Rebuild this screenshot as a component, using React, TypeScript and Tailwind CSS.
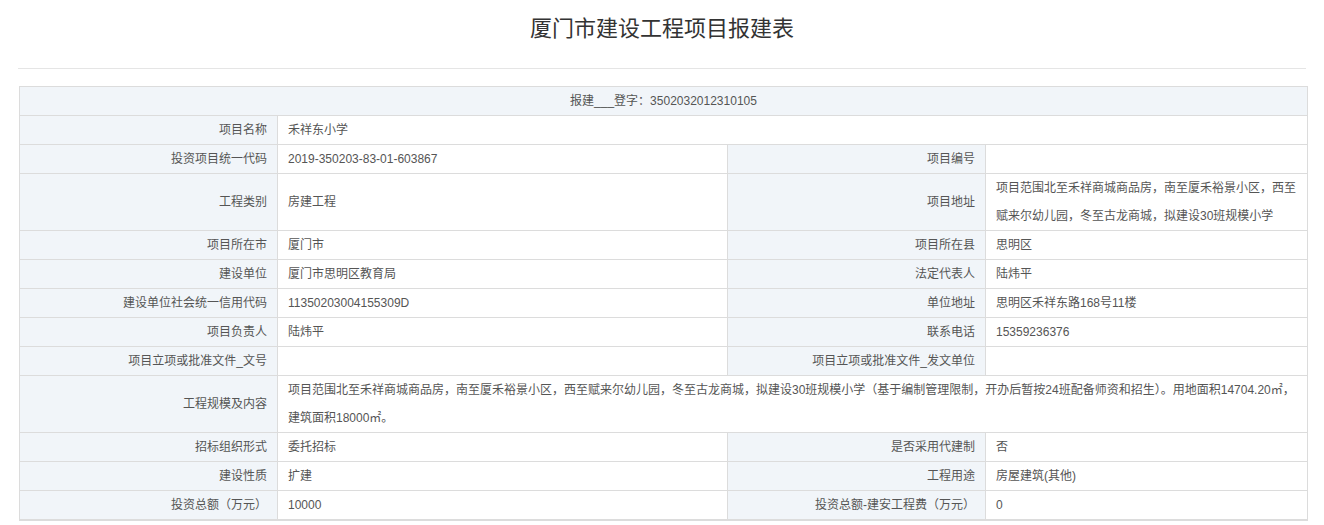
export default function App() {
  const L = "bg-[#f1f5f9] border border-[#dcdcdc] text-right pr-[10px] align-middle";
  const V = "border border-[#dcdcdc] pl-[10px] pr-[8px] align-middle";
  const rows: [string, string, string, string][] = [
    ["投资项目统一代码", "2019-350203-83-01-603867", "项目编号", ""],
    ["工程类别", "房建工程", "项目地址", "项目范围北至禾祥商城商品房，南至厦禾裕景小区，西至赋来尔幼儿园，冬至古龙商城，拟建设30班规模小学"],
    ["项目所在市", "厦门市", "项目所在县", "思明区"],
    ["建设单位", "厦门市思明区教育局", "法定代表人", "陆炜平"],
    ["建设单位社会统一信用代码", "11350203004155309D", "单位地址", "思明区禾祥东路168号11楼"],
    ["项目负责人", "陆炜平", "联系电话", "15359236376"],
    ["项目立项或批准文件_文号", "", "项目立项或批准文件_发文单位", ""],
  ];
  const rows2: [string, string, string, string][] = [
    ["招标组织形式", "委托招标", "是否采用代建制", "否"],
    ["建设性质", "扩建", "工程用途", "房屋建筑(其他)"],
    ["投资总额（万元）", "10000", "投资总额-建安工程费（万元）", "0"],
    ["", "", "", ""],
  ];
  const R = (r: [string, string, string, string], i: number) => (
    <tr key={i}>
      <td className={L}>{r[0]}</td>
      <td className={V}>{r[1]}</td>
      <td className={L}>{r[2]}</td>
      <td className={V}>{r[3]}</td>
    </tr>
  );
  return (
    <div className="bg-white w-[1324px] h-[525px] overflow-hidden text-[#555] text-[12px] leading-[28px]" style={{ fontFamily: '"Liberation Sans","Noto Sans CJK SC",sans-serif' }}>
      <h1 className="text-center text-[22px] text-[#333] leading-[30px] pt-[14px] pb-[24px]">厦门市建设工程项目报建表</h1>
      <div className="mx-[18px] w-[1288px] border-t border-[#e5e5e5]"></div>
      <table className="ml-[19px] mt-[17px] w-[1288px] border-collapse table-fixed">
        <colgroup>
          <col className="w-[258px]" />
          <col className="w-[450px]" />
          <col className="w-[258px]" />
          <col className="w-[322px]" />
        </colgroup>
        <tbody>
          <tr><td colSpan={4} className="bg-[#f1f5f9] border border-[#dcdcdc] text-center">报建___登字：3502032012310105</td></tr>
          <tr><td className={L}>项目名称</td><td colSpan={3} className={V}>禾祥东小学</td></tr>
          {rows.map(R)}
          <tr><td className={L}>工程规模及内容</td><td colSpan={3} className={V}>项目范围北至禾祥商城商品房，南至厦禾裕景小区，西至赋来尔幼儿园，冬至古龙商城，拟建设30班规模小学（基于编制管理限制，开办后暂按24班配备师资和招生）。用地面积14704.20㎡，建筑面积18000㎡。</td></tr>
          {rows2.map(R)}
        </tbody>
      </table>
    </div>
  );
}
